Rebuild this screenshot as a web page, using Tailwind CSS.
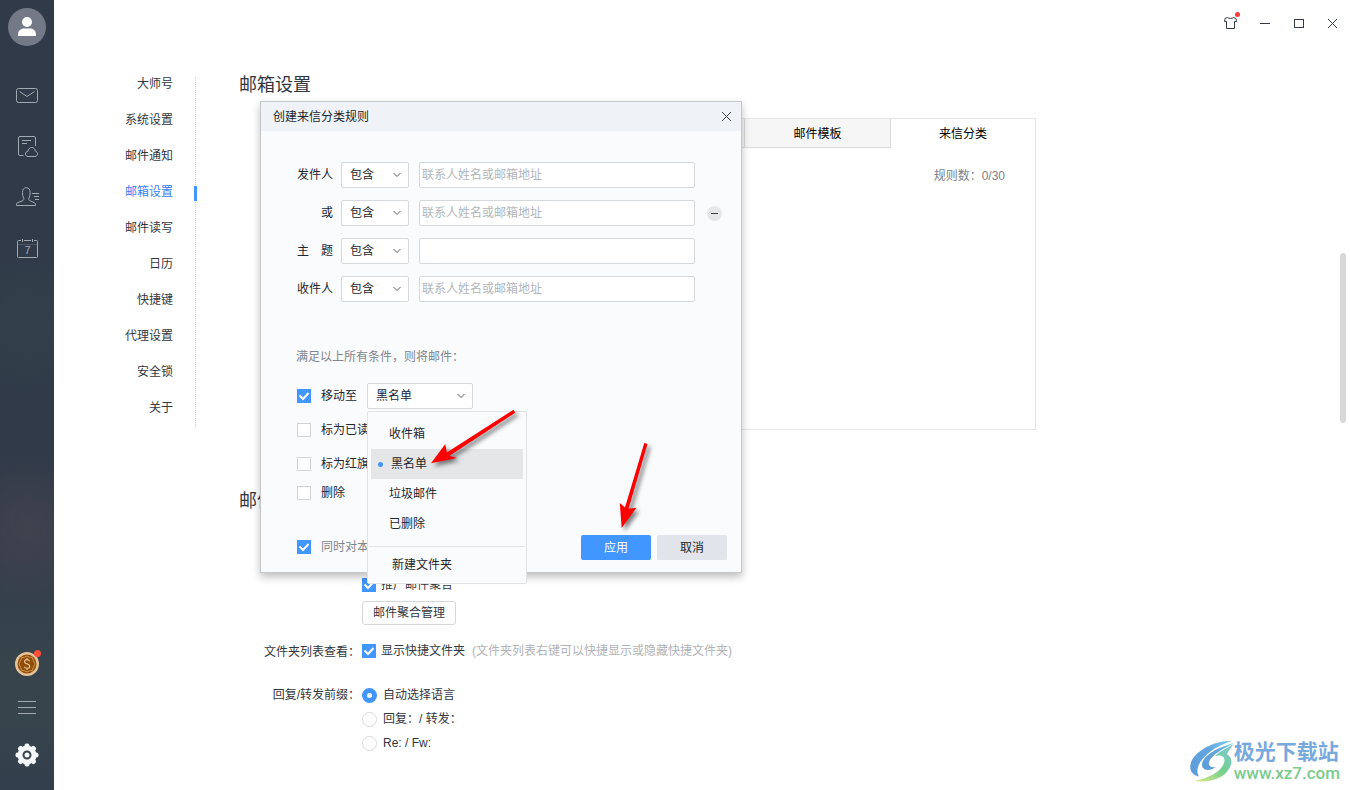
<!DOCTYPE html>
<html lang="zh-CN">
<head>
<meta charset="utf-8">
<meta name="viewport" content="width=device-width, initial-scale=1">
<title>邮箱设置</title>
<script src="https://cdn.jsdelivr.net/npm/@tailwindcss/browser@4"></script>
</head>
<body class="bg-white font-['Liberation_Sans','Noto_Sans_CJK_SC',sans-serif] text-xs leading-5 text-[#333740]">
<div class="relative flex min-h-screen overflow-hidden">

  <!-- Sidebar -->
  <aside class="flex w-[54px] shrink-0 flex-col items-center bg-[radial-gradient(circle_at_50%_41%,#33404a_0,transparent_80px),radial-gradient(circle_at_50%_67%,#41424e_0,transparent_80px),linear-gradient(#303a49_0%,#303a49_62%,#37444c_84%,#37444c_92%,#323e4c_100%)] pt-2 pb-[23px] text-[#a3a9b1]">
    <button aria-label="账户" class="size-[38px]">
      <svg viewBox="0 0 38 38" class="size-full"><circle cx="19" cy="19" r="19" fill="#737986"/><circle cx="19" cy="14" r="5" fill="#fff"/><path d="M10 28v-1.500c0-3.500 2.500-6 6-6h6c3.500 0 6 2.500 6 6V28z" fill="#fff"/></svg>
    </button>
    <nav class="mt-[37px] flex flex-col gap-[27px]" aria-label="主导航">
      <button aria-label="邮件" class="size-6"><svg viewBox="0 0 24 24" fill="none" stroke="currentColor" class="size-full"><rect x="1.500" y="5.500" width="21" height="14" rx="2"/><path d="M4.500 8.500L12 13.500l7.500-5"/></svg></button>
      <button aria-label="笔记" class="size-6"><svg viewBox="0 0 24 24" fill="none" stroke="currentColor" class="size-full"><path d="M20.500 12V4a1.500 1.500 0 0 0-1.500-1.500H5A1.500 1.500 0 0 0 3.500 4v16A1.500 1.500 0 0 0 5 21.500h3.500M7 6.500h9M7 9.500h5M13 22.500c-1.500 0-2.500-1.200-2.500-2.500 0-1.600 1-2.600 2.500-2.700.300-2 1.500-3.800 3.700-3.800s3.500 1.700 3.600 3.600c1.400.400 2.200 1.400 2.200 2.700 0 1.500-1 2.700-2.500 2.700z"/></svg></button>
      <button aria-label="联系人" class="size-6"><svg viewBox="0 0 24 24" fill="none" stroke="currentColor" class="size-full"><path d="M1.500 20.500v-1.300c0-.800.500-1.300 1.300-1.600l4.200-1.600c1.500-.500 2-1.300 1.800-2.500C7.800 11.500 7.500 9.500 7.500 7.500c0-3 1.200-4.800 3.800-4.800s3.800 1.800 3.800 4.800c0 2-.300 4-1.300 6-.200 1.200.300 2 1.800 2.500l3.600 1.600c.800.300 1.300.800 1.300 1.600v1.300zM17 8.500h7M19 11.500h5M20 14.500h4"/></svg></button>
      <button aria-label="日历" class="size-6"><svg viewBox="0 0 24 24" fill="none" stroke="currentColor" class="size-full"><path d="M6 4.500H3.500a1 1 0 0 0-1 1v15a1 1 0 0 0 1 1h18a1 1 0 0 0 1-1v-15a1 1 0 0 0-1-1H19M9 4.500h7M7.500 3v3M17.500 3v3"/><path d="M3 8.500h19" opacity=".25"/><text x="12.500" y="18" text-anchor="middle" font-size="11" fill="currentColor" stroke="none">7</text></svg></button>
    </nav>
    <div class="mt-auto flex flex-col items-center">
      <button aria-label="金币" class="relative size-6">
        <svg viewBox="0 0 24 24" class="size-full"><circle cx="12" cy="12" r="12" fill="#e6c398"/><circle cx="12" cy="12" r="9.500" fill="#8f4d08"/><path d="M12 4l2.500 1.200 2.900.300.800 2.700L20 12l-1.800 3.800-.800 2.700-2.900.300L12 20l-2.500-1.200-2.900-.300-.800-2.700L4 12l1.800-3.800.800-2.700 2.900-.300z" fill="none" stroke="#cf9750" stroke-width="1"/><path d="M14.600 9.200c-.400-1-1.300-1.500-2.600-1.500-1.500 0-2.500.800-2.500 2 0 3 5.300 1.500 5.300 4.500 0 1.300-1.100 2.100-2.700 2.100-1.500 0-2.500-.600-2.900-1.700M12 6v1.700M12 16.300V18" fill="none" stroke="#e6c398" stroke-width="1.200"/></svg>
        <span class="absolute -top-0.5 -right-0.5 size-[7px] rounded-full bg-[#ff4f36]"></span>
      </button>
      <button aria-label="菜单" class="mt-[19px] size-6"><svg viewBox="0 0 24 24" stroke="currentColor" class="size-full"><path d="M3 6.500h18M3 12.500h18M3 18.500h18"/></svg></button>
      <button aria-label="设置" class="mt-6 size-6"><svg viewBox="0 0 24 24" class="size-full"><g fill="#f4f7fc"><circle cx="12" cy="12" r="9.500"/><rect x="9.500" y="0.500" width="5" height="23" rx="2"/><rect x="9.500" y="0.500" width="5" height="23" rx="2" transform="rotate(45 12 12)"/><rect x="9.500" y="0.500" width="5" height="23" rx="2" transform="rotate(90 12 12)"/><rect x="9.500" y="0.500" width="5" height="23" rx="2" transform="rotate(135 12 12)"/></g><circle cx="12" cy="12" r="3.500" fill="none" stroke="#35424c" stroke-width="2"/></svg></button>
    </div>
  </aside>

  <div class="flex min-w-0 flex-1 flex-col">
    <!-- Window controls -->
    <header class="flex h-[66px] items-start justify-end gap-[18px] pt-[15px] pr-[10px] text-[#343b45]">
      <button aria-label="皮肤" class="relative size-4"><svg viewBox="0 0 16 16" fill="none" stroke="currentColor" class="size-full"><path d="M5.500 2.500L3 3.500 2.500 6.500h2v7h8v-7h2L14 3.500l-2.500-1c-1.500 1.200-4.500 1.200-6 0z"/></svg><span class="absolute -top-[3px] -right-0.5 size-[5px] rounded-full bg-[#fb3b3b]"></span></button>
      <button aria-label="最小化" class="size-4"><svg viewBox="0 0 16 16" stroke="currentColor" class="size-full"><path d="M4 8.500h10"/></svg></button>
      <button aria-label="最大化" class="size-4"><svg viewBox="0 0 16 16" fill="none" stroke="currentColor" class="size-full"><rect x="4.500" y="4.500" width="9" height="8"/></svg></button>
      <button aria-label="关闭" class="size-4"><svg viewBox="0 0 16 16" stroke="currentColor" class="size-full"><path d="M4 4l9 9M13 4l-9 9"/></svg></button>
    </header>

    <div class="flex flex-1">
      <!-- Settings categories -->
      <nav class="w-[119px] shrink-0 self-start text-right" aria-label="设置分类">
        <a href="#" class="block leading-9">大师号</a>
        <a href="#" class="block leading-9">系统设置</a>
        <a href="#" class="block leading-9">邮件通知</a>
        <a href="#" aria-current="page" class="relative block leading-9 text-[#3a7ef5]">邮箱设置<span class="absolute top-3 -right-6 h-[15px] w-[3px] bg-[#4196ff]"></span></a>
        <a href="#" class="block leading-9">邮件读写</a>
        <a href="#" class="block leading-9">日历</a>
        <a href="#" class="block leading-9">快捷键</a>
        <a href="#" class="block leading-9">代理设置</a>
        <a href="#" class="block leading-9">安全锁</a>
        <a href="#" class="block leading-9">关于</a>
      </nav>
      <div class="mt-[11px] ml-[22px] h-[350px] border-l border-dotted border-[#d0d3d6]"></div>

      <main class="min-w-0 flex-1 pl-[43px]">
        <h1 class="text-lg leading-[38px]">邮箱设置</h1>
        <section class="mt-3.5 ml-[25px] h-[312px] max-w-[772px] border border-[#e2e4e6]">
          <div class="flex h-[29px] leading-7 text-black" role="tablist">
            <div class="flex-1 border-b border-[#d9dbdd] bg-[#f6f6f6]"></div>
            <button role="tab" class="w-[147px] border-x border-b border-[#d9dbdd] bg-[#f6f6f6] pt-px">邮件模板</button>
            <button role="tab" aria-selected="true" class="w-[144px]">来信分类</button>
          </div>
          <p class="mt-[18px] pr-[30px] text-right text-[#7c828a]">规则数：0/30</p>
        </section>

        <h2 class="mt-[52px] text-lg leading-[38px]">邮件读写</h2>
        <div class="mt-[55px] grid grid-cols-[121px_1fr] gap-x-0.5">
          <div class="col-start-2 flex flex-col items-start">
            <label class="flex h-5 items-center gap-[5px]"><span class="relative size-3.5"><input type="checkbox" checked class="block size-3.5 appearance-none bg-[#4196ff]"><svg viewBox="0 0 14 14" class="pointer-events-none absolute inset-0" fill="none" stroke="#fff" stroke-width="2"><path d="M2.500 6.500l3.500 3.500 5.500-6"/></svg></span>推广邮件聚合</label>
            <button class="mt-1.5 h-6 rounded-[3px] border border-[#d5d8da] px-[10px] leading-[22px]">邮件聚合管理</button>
          </div>
          <div class="mt-[17px] text-right">文件夹列表查看：</div>
          <div class="mt-4 flex h-5 items-center gap-[7px]">
            <label class="flex items-center gap-[5px]"><span class="relative size-3.5"><input type="checkbox" checked class="block size-3.5 appearance-none bg-[#4196ff]"><svg viewBox="0 0 14 14" class="pointer-events-none absolute inset-0" fill="none" stroke="#fff" stroke-width="2"><path d="M2.500 6.500l3.500 3.500 5.500-6"/></svg></span>显示快捷文件夹</label>
            <span class="text-[#b0b3b7]">(文件夹列表右键可以快捷显示或隐藏快捷文件夹)</span>
          </div>
          <div class="mt-[21px] text-right leading-6">回复/转发前缀：</div>
          <div class="mt-[21px] flex flex-col items-start">
            <label class="flex h-6 items-center gap-1.5"><input type="radio" name="prefix" checked class="size-[15px] appearance-none rounded-full border-5 border-[#4196ff] bg-white">自动选择语言</label>
            <label class="flex h-6 items-center gap-1.5"><input type="radio" name="prefix" class="size-[15px] appearance-none rounded-full border border-[#d8dadc] bg-white">回复：/ 转发：</label>
            <label class="flex h-6 items-center gap-1.5"><input type="radio" name="prefix" class="size-[15px] appearance-none rounded-full border border-[#d8dadc] bg-white">Re: / Fw:</label>
          </div>
        </div>
      </main>
    </div>
  </div>

  <!-- Scrollbar thumb -->
  <div class="absolute top-[253px] right-1 h-[170px] w-1.5 rounded-full bg-[#d8d8d8]"></div>

  <!-- Rule dialog -->
  <form role="dialog" aria-labelledby="dialog-title" class="absolute top-[101px] left-[260px] flex w-[482px] flex-col border border-[#c5c7c9] bg-[#fafbfd] pb-3 text-[#22262d] shadow-[0_4px_8px_rgba(0,0,0,0.25)]">
    <div class="flex h-[29px] items-center justify-between bg-[#eff3f8] pr-[7px] pl-3">
      <h2 id="dialog-title">创建来信分类规则</h2>
      <button type="button" aria-label="关闭" class="size-4 text-[#3c434c]"><svg viewBox="0 0 16 16" stroke="currentColor" class="size-full"><path d="M4 3l9 9M13 3l-9 9"/></svg></button>
    </div>

    <div class="mt-[31px] flex flex-col gap-3">
      <div class="flex h-[26px] items-center">
        <label for="from" class="w-[72px] text-right">发件人</label>
        <span class="relative ml-2 h-full w-[68px]"><select aria-label="发件人条件" class="block size-full appearance-none rounded-[2px] border border-[#d5d9dc] bg-white pl-2"><option>包含</option></select><svg viewBox="0 0 8 6" fill="none" stroke="#555c64" class="pointer-events-none absolute top-[10px] right-2 h-1.5 w-2"><path d="M0.500 1L4 4.500 7.500 1"/></svg></span>
        <input id="from" type="text" placeholder="联系人姓名或邮箱地址" class="ml-[10px] h-full w-[276px] rounded-[2px] border border-[#d5d9dc] bg-white px-0.5 placeholder:text-[#b3b6ba]">
      </div>
      <div class="flex h-[26px] items-center">
        <label for="from-or" class="w-[72px] text-right">或</label>
        <span class="relative ml-2 h-full w-[68px]"><select aria-label="或条件" class="block size-full appearance-none rounded-[2px] border border-[#d5d9dc] bg-white pl-2"><option>包含</option></select><svg viewBox="0 0 8 6" fill="none" stroke="#555c64" class="pointer-events-none absolute top-[10px] right-2 h-1.5 w-2"><path d="M0.500 1L4 4.500 7.500 1"/></svg></span>
        <input id="from-or" type="text" placeholder="联系人姓名或邮箱地址" class="ml-[10px] h-full w-[276px] rounded-[2px] border border-[#d5d9dc] bg-white px-0.5 placeholder:text-[#b3b6ba]">
        <button type="button" aria-label="移除条件" class="ml-3 size-[15px] rounded-full bg-[#e5e7e9]"><svg viewBox="0 0 15 15" stroke="#3c434c" class="size-full"><path d="M4 7.500h7"/></svg></button>
      </div>
      <div class="flex h-[26px] items-center">
        <label for="subject" class="w-[72px] text-right">主　题</label>
        <span class="relative ml-2 h-full w-[68px]"><select aria-label="主题条件" class="block size-full appearance-none rounded-[2px] border border-[#d5d9dc] bg-white pl-2"><option>包含</option></select><svg viewBox="0 0 8 6" fill="none" stroke="#555c64" class="pointer-events-none absolute top-[10px] right-2 h-1.5 w-2"><path d="M0.500 1L4 4.500 7.500 1"/></svg></span>
        <input id="subject" type="text" class="ml-[10px] h-full w-[276px] rounded-[2px] border border-[#d5d9dc] bg-white px-0.5">
      </div>
      <div class="flex h-[26px] items-center">
        <label for="to" class="w-[72px] text-right">收件人</label>
        <span class="relative ml-2 h-full w-[68px]"><select aria-label="收件人条件" class="block size-full appearance-none rounded-[2px] border border-[#d5d9dc] bg-white pl-2"><option>包含</option></select><svg viewBox="0 0 8 6" fill="none" stroke="#555c64" class="pointer-events-none absolute top-[10px] right-2 h-1.5 w-2"><path d="M0.500 1L4 4.500 7.500 1"/></svg></span>
        <input id="to" type="text" placeholder="联系人姓名或邮箱地址" class="ml-[10px] h-full w-[276px] rounded-[2px] border border-[#d5d9dc] bg-white px-0.5 placeholder:text-[#b3b6ba]">
      </div>
    </div>

    <p class="mt-[45px] pl-[35px] text-[#80858c]">满足以上所有条件，则将邮件：</p>

    <div class="mt-4 flex items-center pl-9">
      <label class="flex items-center gap-[10px]"><span class="relative size-3.5"><input type="checkbox" checked class="block size-3.5 appearance-none bg-[#4196ff]"><svg viewBox="0 0 14 14" class="pointer-events-none absolute inset-0" fill="none" stroke="#fff" stroke-width="2"><path d="M2.500 6.500l3.500 3.500 5.500-6"/></svg></span>移动至</label>
      <div class="relative ml-[10px] h-[26px] w-[106px]">
        <select aria-label="目标文件夹" class="block size-full appearance-none rounded-[2px] border border-[#d5d9dc] bg-white pl-2"><option>黑名单</option></select>
        <svg viewBox="0 0 8 6" fill="none" stroke="#555c64" class="pointer-events-none absolute top-[10px] right-2 h-1.5 w-2"><path d="M0.500 1L4 4.500 7.500 1"/></svg>
        <!-- Folder menu -->
        <div class="absolute top-7 left-0 z-10 w-[160px] rounded-[2px] border border-[#e0e3e6] bg-[#fafbfd] pt-[7px] pb-[3px] leading-[30px]">
          <ul role="listbox" aria-label="文件夹" class="px-[3px]">
            <li role="option" class="pl-[18px]">收件箱</li>
            <li role="option" aria-selected="true" class="flex items-center gap-2 bg-[#e5e6e8] pl-[7px]"><span class="size-[5px] rounded-full bg-[#4196ff]"></span>黑名单</li>
            <li role="option" class="pl-[18px]">垃圾邮件</li>
            <li role="option" class="pl-[18px]">已删除</li>
          </ul>
          <hr class="mx-px mt-[7px] mb-[3px] border-[#e0e3e6]">
          <button type="button" class="block w-full pl-6 text-left">新建文件夹</button>
        </div>
      </div>
    </div>
    <label class="mt-[11px] ml-9 flex h-5 items-center gap-[10px]"><input type="checkbox" class="size-3.5 appearance-none border border-[#d0d4d7] bg-white">标为已读</label>
    <label class="mt-3.5 ml-9 flex h-5 items-center gap-[10px]"><input type="checkbox" class="size-3.5 appearance-none border border-[#d0d4d7] bg-white">标为红旗</label>
    <label class="mt-[9px] ml-9 flex h-5 items-center gap-[10px]"><input type="checkbox" class="size-3.5 appearance-none border border-[#d0d4d7] bg-white">删除</label>

    <div class="mt-8 flex h-[25px] items-start gap-1.5 pr-3.5 pl-9">
      <label class="mt-0.5 mr-auto flex items-center gap-[10px] text-[#80858c]"><span class="relative size-3.5"><input type="checkbox" checked class="block size-3.5 appearance-none bg-[#4196ff]"><svg viewBox="0 0 14 14" class="pointer-events-none absolute inset-0" fill="none" stroke="#fff" stroke-width="2"><path d="M2.500 6.500l3.500 3.500 5.500-6"/></svg></span>同时对本地邮件</label>
      <button type="submit" class="h-full w-[70px] rounded-[2px] bg-[#4196ff] text-white">应用</button>
      <button type="button" class="h-full w-[70px] rounded-[2px] bg-[#e1e4eb]">取消</button>
    </div>
  </form>

  <!-- Pointer arrows -->
  <svg viewBox="0 0 100 68" class="pointer-events-none absolute top-[405px] left-[425px] z-20 h-[68px] w-[100px] drop-shadow-[3px_3px_2px_rgba(0,0,0,0.5)]" fill="red"><path d="M6 58.300L20.300 39l1.500 8.600L88.500 4.800l1.700 2.900L24.500 50.800l7.500 2.200z"/></svg>
  <svg viewBox="0 0 40 96" class="pointer-events-none absolute top-[438px] left-[612px] z-20 h-24 w-10 drop-shadow-[3px_3px_2px_rgba(0,0,0,0.5)]" fill="red"><path d="M9.700 90L7.800 65l5.200 4.500L32.300 5l3.200.9L16.500 70.700l8-.9z"/></svg>

  <!-- Site logo -->
  <div class="absolute right-[10px] bottom-[7px] flex items-center">
    <svg viewBox="0 0 44 42" class="h-[42px] w-[44px]">
      <defs>
        <linearGradient id="swoosh-blue" x1="0" y1="1" x2="1" y2="0"><stop offset="0" stop-color="#5d9bdb"/><stop offset=".6" stop-color="#62a5df"/><stop offset="1" stop-color="#7fcdf0"/></linearGradient>
        <linearGradient id="swoosh-green" x1="0" y1="1" x2="1" y2="0"><stop offset="0" stop-color="#e2ea86"/><stop offset=".5" stop-color="#74cf8c"/><stop offset="1" stop-color="#7cc8e4"/></linearGradient>
      </defs>
      <path d="M42 0C27-1 8 8 2 19c-4 8-1 15 7 16.500C5.500 30 8 22 15 15.500 22 8 32 3 42 0z" fill="url(#swoosh-blue)"/>
      <path d="M44 2C28 6 12 15 12 24c0 5 7 7 14 2-5 1-8-1-7-5 2-7 14-13 25-19z" fill="url(#swoosh-blue)"/>
      <path d="M44 3C37 7 30 10 25 15c7-2 11 1 9 7C31 31 19 37 4 40c17 2 31-3 36-14 3-6 1-10-3-13 2-4 4-7 7-10z" fill="url(#swoosh-green)"/>
    </svg>
    <div class="flex flex-col">
      <span class="text-[21px] leading-[22px] font-bold text-[#77a9dc]">极光下载站</span>
      <span class="font-[Roboto] text-[17px] leading-5 font-medium text-[#7acb8d]">www.xz7.com</span>
    </div>
  </div>
</div>
</body>
</html>
